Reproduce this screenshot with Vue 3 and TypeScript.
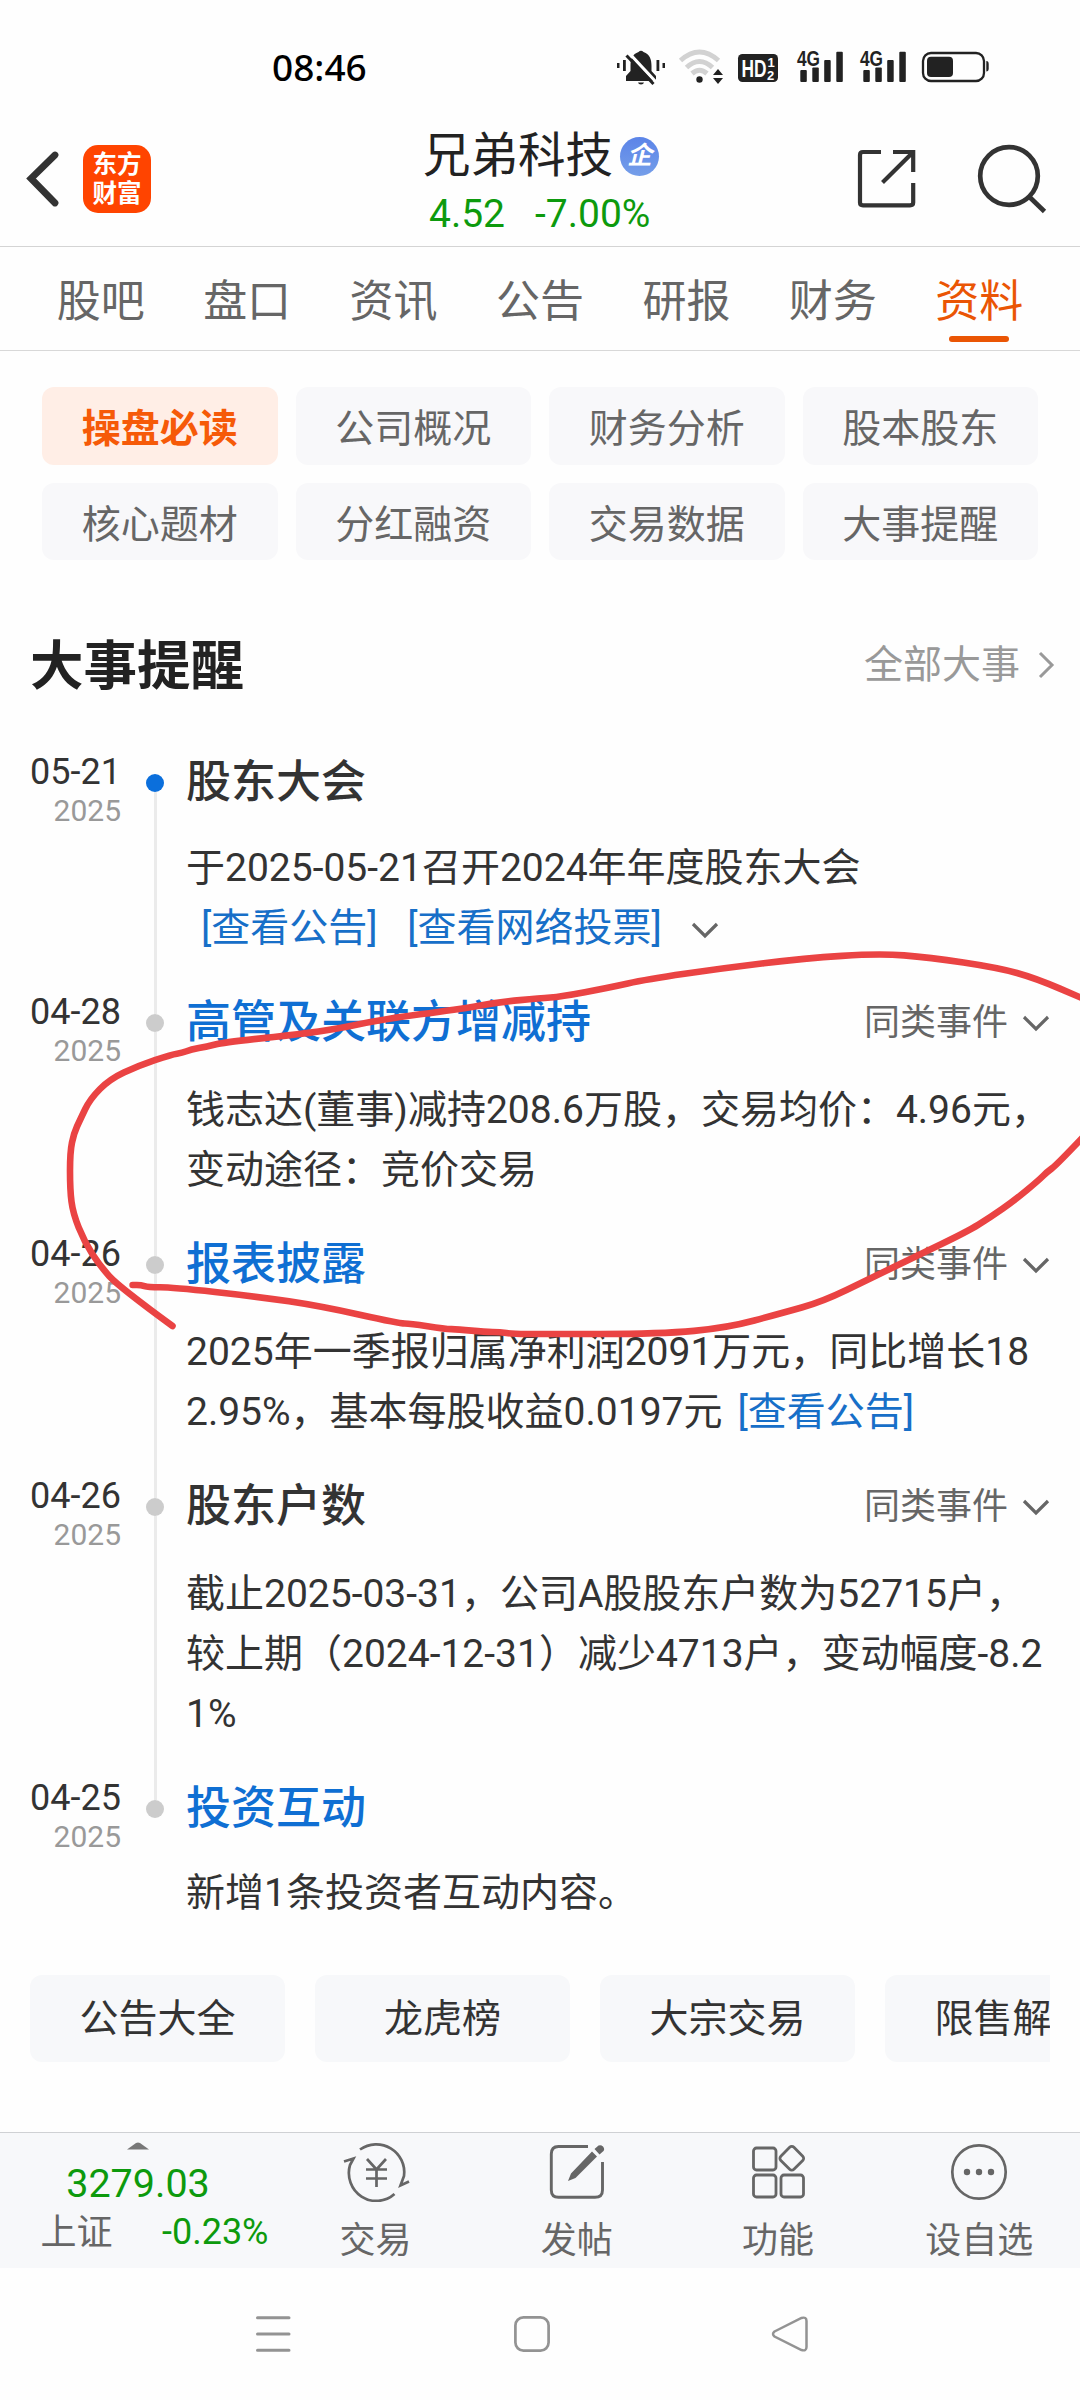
<script setup lang="ts">
interface Segment {
  text: string
  link?: boolean
}
interface TimelineEntry {
  day: string
  year: string
  title: string
  linked: boolean
  similar: boolean
  current?: boolean
  lines: Segment[][]
  expandable?: boolean
}
type Point = [number, number]

const tabs: string[] = ['股吧', '盘口', '资讯', '公告', '研报', '财务', '资料']
const activeTab = '资料'

const sections: string[] = [
  '操盘必读', '公司概况', '财务分析', '股本股东',
  '核心题材', '分红融资', '交易数据', '大事提醒',
]
const activeSection = '操盘必读'

const entries: TimelineEntry[] = [
  {
    day: '05-21', year: '2025', title: '股东大会', linked: false, similar: false, current: true, expandable: true,
    lines: [
      [{ text: '于2025-05-21召开2024年年度股东大会' }],
      [{ text: '[查看公告]', link: true }, { text: '[查看网络投票]', link: true }],
    ],
  },
  {
    day: '04-28', year: '2025', title: '高管及关联方增减持', linked: true, similar: true,
    lines: [
      [{ text: '钱志达(董事)减持208.6万股，交易均价：4.96元，' }],
      [{ text: '变动途径：竞价交易' }],
    ],
  },
  {
    day: '04-26', year: '2025', title: '报表披露', linked: true, similar: true,
    lines: [
      [{ text: '2025年一季报归属净利润2091万元，同比增长18' }],
      [{ text: '2.95%，基本每股收益0.0197元' }, { text: '[查看公告]', link: true }],
    ],
  },
  {
    day: '04-26', year: '2025', title: '股东户数', linked: false, similar: true,
    lines: [
      [{ text: '截止2025-03-31，公司A股股东户数为52715户，' }],
      [{ text: '较上期（2024-12-31）减少4713户，变动幅度-8.2' }],
      [{ text: '1%' }],
    ],
  },
  {
    day: '04-25', year: '2025', title: '投资互动', linked: true, similar: false,
    lines: [[{ text: '新增1条投资者互动内容。' }]],
  },
]

const shortcuts: string[] = ['公告大全', '龙虎榜', '大宗交易', '限售解禁']

// Freehand pen mark: smooth the sampled points through their midpoints
function smooth(points: Point[]): string {
  let d = `M${points[0][0]} ${points[0][1]}`
  for (let i = 1; i < points.length - 1; i++) {
    const [x, y] = points[i]
    const mx = (x + points[i + 1][0]) / 2
    const my = (y + points[i + 1][1]) / 2
    d += ` Q${x} ${y} ${mx} ${my}`
  }
  const last = points[points.length - 1]
  return `${d} L${last[0]} ${last[1]}`
}

const penStrokes: string[] = [
  smooth([
    [172.5, 1326], [118.8, 1286.7], [99.9, 1265.7], [84.4, 1241.7], [73, 1213.3], [70, 1190], [70, 1152],
    [74, 1133], [80, 1120], [90, 1099], [110, 1079], [137.7, 1066], [172, 1054.3], [182, 1053], [191, 1049.5], [206.6, 1046.7],
    [223.8, 1042.3], [323.7, 1031.7], [382, 1019.3], [458, 1009.3], [500, 1002], [540, 998.3], [560.7, 996.7],
    [608.9, 987.7], [646.7, 979.3], [722.5, 968.3], [805, 958.3], [879, 953.5], [929, 957.3], [998, 967.7],
    [1035.9, 978.3], [1084, 999],
  ]),
  smooth([
    [1084, 1136], [1056.5, 1165], [1047, 1172], [1039, 1180], [1015, 1200], [990, 1217.5], [967, 1231.7], [915, 1256.7],
    [870.6, 1278.3], [822.4, 1301.7], [781, 1313.3], [727.7, 1327.7], [660.5, 1334], [540, 1334], [513, 1334],
    [500, 1332], [485, 1332], [458, 1329.3], [445, 1329], [410, 1323.5], [399.4, 1323.5], [320, 1306], [258, 1296.7], [172, 1287.3], [148, 1287.3],
    [141, 1285], [132.6, 1285],
  ]),
]
</script>

<template>
  <div class="screen">
    <div class="status">
      <div class="time">08:46</div>
      <svg class="status-icons" width="400" height="50" viewBox="600 40 400 50">
        <g fill="#222">
          <path d="M638.500 52 q2.500 -2.500 5 0 C650 54 651.500 60 651.500 66 V71 L656 76 V81 H626 V76 L630.500 71 V66 C630.500 59 632.500 54 638.500 52Z" />
          <path d="M638 82.500h6q-.5 2-3 2t-3-2z" />
          <rect x="617" y="63" width="2.500" height="5" /><rect x="623" y="60" width="2.800" height="11" />
          <rect x="656.500" y="60" width="2.800" height="11" /><rect x="662.500" y="63" width="2.500" height="5" />
        </g>
        <path d="M629 53 L656 82" stroke="#fff" stroke-width="3.200" />
        <path d="M626.500 55.500 L653.500 84" stroke="#222" stroke-width="3" />
        <g fill="none" stroke="#d2d2d2" stroke-width="5">
          <path d="M680.500 60.500 Q699.500 43.500 718.500 60.500" /><path d="M686.500 67.500 Q699.500 55.500 712.500 67.500" /><path d="M692 73.500 Q699.500 67 707 73.500" />
        </g>
        <g fill="#222">
          <circle cx="699.500" cy="79.500" r="3.200" />
          <path d="M713 75 L718 69 L723 75Z M713 78 H723 L718 84Z" />
          <rect x="738" y="54" width="40" height="28" rx="4.500" />
        </g>
        <g class="hd" fill="#fff">
          <text x="741.500" y="77" font-size="24" textLength="25" lengthAdjust="spacingAndGlyphs">HD</text>
          <text x="767.500" y="67" font-size="13">1</text><text x="767" y="79.500" font-size="13">2</text>
        </g>
        <g v-for="dx in [0, 63]" :key="dx" :transform="`translate(${dx} 0)`" fill="#222">
          <text class="hd" x="797" y="65.500" font-size="21.500" textLength="23" lengthAdjust="spacingAndGlyphs">4G</text>
          <rect x="800.300" y="70" width="6.500" height="12" rx="1" /><rect x="812.300" y="67.500" width="6.500" height="14.500" rx="1" />
          <rect x="824.200" y="60" width="6.500" height="22" rx="1" /><rect x="836.300" y="51.700" width="6.500" height="30.300" rx="1" />
        </g>
        <rect x="923" y="53" width="61" height="28" rx="8" fill="none" stroke="#222" stroke-width="2.300" />
        <rect x="927" y="56.700" width="26" height="20.300" rx="4" fill="#222" />
        <path d="M986.300 61q2.400 0 2.400 3v4.500q0 3-2.400 3z" fill="#222" />
      </svg>
    </div>

    <header class="header">
      <div class="header-side">
        <svg width="36" height="60" viewBox="25 150 36 60"><path d="M55 156 L31 179.500 L55 204" fill="none" stroke="#333" stroke-width="6.800" stroke-linecap="round" stroke-linejoin="miter" /></svg>
        <div class="logo"><span>东方</span><span>财富</span></div>
      </div>
      <div class="stock">
        <div class="stock-name">兄弟科技<span class="badge"><i>企</i></span></div>
        <div class="quote"><span>4.52</span><span>-7.00%</span></div>
      </div>
      <div class="header-actions">
        <svg width="60" height="60" viewBox="857 150 60 60" fill="none" stroke="#333" stroke-width="4.200">
          <path d="M881 153 H863 Q860 153 860 156 V203.500 Q860 206.300 863 206.300 H910 Q913.200 206.300 913.200 203.500 V184" />
          <path d="M893 153 H913.200 V173 M913.200 153 L882.500 183.500" />
        </svg>
        <svg width="72" height="72" viewBox="976 143 72 72" fill="none" stroke="#333" stroke-width="4.700">
          <circle cx="1009" cy="176" r="28.800" /><path d="M1029.500 197 L1044.500 211.500" />
        </svg>
      </div>
    </header>

    <nav class="tabs">
      <div v-for="tab in tabs" :key="tab" class="tab" :class="{ active: tab === activeTab }">{{ tab }}</div>
    </nav>

    <div class="sections">
      <div v-for="s in sections" :key="s" class="section" :class="{ active: s === activeSection }">{{ s }}</div>
    </div>

    <div class="heading">
      <h2>大事提醒</h2>
      <div class="all">
        全部大事
        <svg width="17" height="28" viewBox="0 0 17 28"><path d="M2 2 L14 14 L2 26" fill="none" stroke="#999" stroke-width="3" /></svg>
      </div>
    </div>

    <div class="timeline">
      <div v-for="(e, i) in entries" :key="i" class="entry">
        <div class="date"><div class="day">{{ e.day }}</div><div class="year">{{ e.year }}</div></div>
        <div class="rail">
          <div class="lead" :class="{ line: i > 0 }"></div>
          <div class="dot" :class="{ current: e.current }"></div>
          <div class="tail" :class="{ line: i < entries.length - 1 }"></div>
        </div>
        <div class="content">
          <div class="title-row">
            <span class="title" :class="{ linked: e.linked }">{{ e.title }}</span>
            <span v-if="e.similar" class="similar">同类事件
              <svg width="28" height="17" viewBox="0 0 28 17"><path d="M2 2 L14 14 L26 2" fill="none" stroke="#666" stroke-width="3.200" /></svg>
            </span>
          </div>
          <div class="body" :class="{ spaced: e.similar }">
            <div v-for="(line, l) in e.lines" :key="l" class="body-line">
              <span v-for="(seg, s) in line" :key="s" :class="{ link: seg.link }">{{ seg.text }}</span>
              <svg v-if="e.expandable && l === e.lines.length - 1" class="expand" width="28" height="17" viewBox="0 0 28 17"><path d="M2 2 L14 14 L26 2" fill="none" stroke="#666" stroke-width="3.200" /></svg>
            </div>
          </div>
        </div>
      </div>
    </div>

    <div class="shortcuts">
      <div v-for="s in shortcuts" :key="s" class="shortcut">{{ s }}</div>
    </div>

    <footer class="toolbar">
      <div class="index">
        <svg width="22" height="8" viewBox="0 0 22 8"><path d="M0 7.500 L9 1 Q11 0 13 1 L22 7.500Z" fill="#777" /></svg>
        <div class="index-value">3279.03</div>
        <div class="index-row"><span class="index-name">上证</span><span class="down">-0.23%</span></div>
      </div>
      <div class="action">
        <svg width="68" height="60" viewBox="341 2142 68 60" fill="none" stroke="#666" stroke-width="2.700">
          <path d="M359 2149.500 A28 28 0 0 1 403 2176 L399.500 2185.500 L408 2181.500" />
          <path d="M393.500 2194 A27.500 28 0 0 1 349 2165 L352.500 2158.500 L343 2161.500" />
          <path d="M366 2159 L375.500 2169.500 L385 2159 M375.500 2169 V2187 M365 2169.500 H386 M365 2178.500 H386" />
        </svg>
        <span>交易</span>
      </div>
      <div class="action">
        <svg width="60" height="60" viewBox="547 2142 60 60" fill="none" stroke="#666" stroke-width="2.900">
          <path d="M588 2146.500 H558.500 Q551.300 2146.500 551.300 2154 V2190 Q551.300 2197.300 558.500 2197.300 H595 Q602.500 2197.300 602.500 2190 V2162" />
          <path d="M568 2181 L571 2173.500 L592 2151.500 L597 2156.500 L575.500 2178 Z M594.500 2149 L598.500 2145.500 Q601 2144.500 603 2146.500 Q605 2149 603.500 2151 L599.500 2154.500 Z" fill="#666" stroke="none" />
        </svg>
        <span>发帖</span>
      </div>
      <div class="action">
        <svg width="60" height="60" viewBox="748 2142 60 60" fill="none" stroke="#666" stroke-width="2.800">
          <rect x="753.500" y="2148" width="22.500" height="22" rx="3" /><rect x="753.500" y="2175" width="22.500" height="22" rx="3" />
          <rect x="781" y="2175" width="22.500" height="22" rx="3" /><rect x="782.500" y="2149" width="18.500" height="18.500" rx="3" transform="rotate(45 791.75 2158.3)" />
        </svg>
        <span>功能</span>
      </div>
      <div class="action">
        <svg width="60" height="60" viewBox="949 2142 60 60">
          <circle cx="979" cy="2172" r="26.700" fill="none" stroke="#666" stroke-width="2.700" />
          <g fill="#666"><circle cx="967" cy="2172" r="3.200" /><circle cx="979" cy="2172" r="3.200" /><circle cx="991" cy="2172" r="3.200" /></g>
        </svg>
        <span>设自选</span>
      </div>
    </footer>

    <div class="system-nav">
      <svg width="40" height="40" viewBox="0 0 40 40" stroke="#939393" stroke-width="3" stroke-linecap="round"><path d="M3.500 3.700H35 M3.500 20H35 M3.500 36.300H35" /></svg>
      <svg width="40" height="40" viewBox="0 0 40 40" fill="none" stroke="#939393" stroke-width="2.700"><rect x="3.400" y="3.400" width="33.200" height="33.200" rx="8" /></svg>
      <svg width="40" height="40" viewBox="0 0 40 40" fill="none" stroke="#939393" stroke-width="2.500"><path d="M4.500 17.500 L31.500 4 Q36.500 2.500 36.500 7 V33 Q36.500 37.500 31.500 36 L4.500 22.500 Q1.500 20 4.500 17.500Z" /></svg>
    </div>

    <svg class="pen" width="1080" height="2400" viewBox="0 0 1080 2400">
      <path v-for="(d, i) in penStrokes" :key="i" :d="d" fill="none" stroke="#ea4343" stroke-width="6.600" stroke-linecap="round" stroke-linejoin="round" />
    </svg>
  </div>
</template>

<style>
body { margin: 0; background: #fefefe; }
</style>

<style scoped>
.screen {
  position: relative;
  display: flex;
  flex-direction: column;
  width: 1080px;
  height: 2400px;
  overflow: hidden;
  background: #fefefe;
  color: #333;
  font-family: Roboto, "Noto Sans CJK SC", sans-serif;
  white-space: nowrap;
}
.screen svg { display: block; flex: none; }

.status { display: flex; justify-content: space-between; height: 112px; box-sizing: border-box; padding: 40px 80px 0 272px; }
.time { font: 500 37px/50px "Noto Sans", sans-serif; color: #000; padding-top: 2px; }
.hd { font-family: "Liberation Sans", sans-serif; font-weight: 700; }

.header { display: grid; grid-template-columns: 300px 1fr 300px; height: 134px; border-bottom: 1px solid #d4d4d4; }
.header-side { display: flex; align-items: center; gap: 22px; padding: 0 0 0 25px; }
.logo {
  display: flex; flex-direction: column; justify-content: center; align-items: center;
  width: 68px; height: 68px; border-radius: 15px; background: #ff4400; color: #fff;
  font-size: 24.500px; font-weight: 700; line-height: 29px;
}
.stock { display: flex; flex-direction: column; padding: 14px 0 0 123px; }
.stock-name { display: flex; align-items: center; font-size: 47.500px; line-height: 62px; height: 60px; color: #222; }
.badge {
  display: flex; align-items: center; justify-content: center; width: 39px; height: 39px; margin-left: 7px;
  border-radius: 50%; background: linear-gradient(#5b84e8, #759ee9); color: #fff;
}
.badge i { font-size: 25px; font-weight: 700; line-height: 30px; }
.quote { display: flex; gap: 30px; padding-left: 6px; font-size: 39px; line-height: 50px; margin-top: 3px; color: #0d9a0d; }
.header-actions { display: flex; align-items: center; padding-left: 77px; gap: 59px; }

.tabs { display: flex; height: 103px; padding: 0 27.500px; border-bottom: 1px solid #d8d8d8; }
.tab { position: relative; flex: 1; text-align: center; font-size: 44px; line-height: 110px; height: 103px; color: #666; }
.tab.active { color: #ea5504; }
.tab.active::after { content: ""; position: absolute; left: 50%; bottom: 8px; width: 60px; height: 6px; margin-left: -30px; border-radius: 3px; background: #ea5504; }

.sections { display: grid; grid-template-columns: repeat(4, 1fr); grid-template-rows: 78px 77px; gap: 18px; padding: 36px 42px 0; }
.section { border-radius: 12px; background: #f8f8fa; color: #666; text-align: center; font-size: 39px; line-height: 84px; }
.section.active { background: #ffeee6; color: #f65a08; font-weight: 700; }

.heading { display: flex; align-items: center; justify-content: space-between; height: 90px; margin-top: 60px; padding: 0 25px 0 30px; }
.heading h2 { margin: 4px 0 0; font-size: 53.500px; line-height: 92px; font-weight: 700; color: #222; }
.all { display: flex; align-items: center; gap: 18px; font-size: 39px; line-height: 92px; color: #999; }

.timeline { height: 1225px; margin-top: 40px; }
.entry { display: grid; grid-template-columns: 121px 18px 1fr; column-gap: 25px; padding-right: 30px; }
.date { text-align: right; }
.day { font-size: 36px; line-height: 44px; }
.year { margin-top: -1px; font-size: 30px; line-height: 36px; color: #999; }
.rail { display: flex; flex-direction: column; align-items: center; }
.lead { width: 3px; height: 24px; }
.tail { width: 3px; flex: 1; }
.line { background: #ebebeb; }
.dot { width: 18px; height: 18px; border-radius: 50%; background: #ccc; }
.dot.current { background: #0b6fdc; }
.content { margin-left: -3px; padding: 1px 0 32px; }
.title-row { display: flex; align-items: center; justify-content: space-between; height: 63px; }
.title { font-size: 45px; line-height: 63px; font-weight: 500; }
.linked { color: #0f6fd3; }
.similar { display: flex; align-items: center; gap: 14px; margin-top: 2px; font-size: 36px; line-height: 65px; color: #666; }
.body { margin-top: 23.500px; font-size: 39px; line-height: 60px; }
.body.spaced { margin-top: 26px; }
.body-line { display: flex; align-items: center; height: 60px; }
.link { color: #176fc8; margin-left: 15px; }
.link + .link { margin-left: 29.500px; }
.expand { margin-left: 29px; margin-top: 5px; }

.shortcuts { display: flex; gap: 30px; height: 87px; margin: 0 30px; overflow: hidden; }
.shortcut { flex: 0 0 255px; border-radius: 12px; background: #f7f8fa; text-align: center; font-size: 39px; line-height: 88px; }

.toolbar { display: flex; height: 135px; margin-top: 70px; border-top: 1px solid #cfd1d4; background: #f7f8fa; }
.index { display: flex; flex-direction: column; align-items: center; width: 275px; padding-top: 9px; box-sizing: border-box; }
.index-value { margin-top: 9px; padding-left: 1px; font-size: 39.500px; line-height: 50px; color: #0d9a0d; }
.index-row { display: flex; justify-content: space-between; align-self: flex-start; width: 228px; padding-left: 40.500px; font-size: 36px; line-height: 47px; color: #666; }
.index-name { margin-top: 1px; }
.down { color: #0d9a0d; }
.action { flex: 1; display: flex; flex-direction: column; align-items: center; padding-top: 9px; font-size: 36px; line-height: 40px; color: #666; }
.action span { margin-top: 19px; }

.system-nav { display: flex; align-items: center; gap: 218px; height: 132px; padding-left: 254px; }
.pen { position: absolute; left: 0; top: 0; pointer-events: none; }
</style>
